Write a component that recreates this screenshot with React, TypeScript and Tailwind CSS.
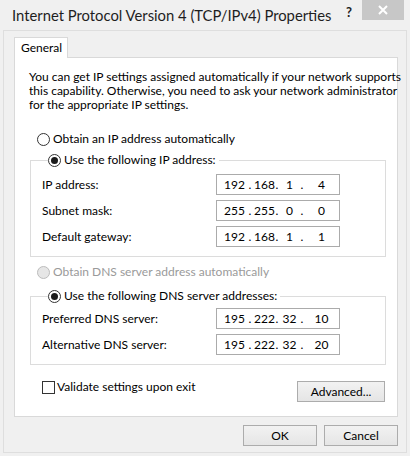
import React from "react";

const SEG_W = ["w-[23px]", "w-[19px]", "w-[17px]", "w-[31px]"];

function Radio({ checked, disabled, label }: { checked?: boolean; disabled?: boolean; label: string }) {
  return (
    <span className="flex items-center h-[16px] gap-[3px]">
      <span
        className={
          disabled
            ? "w-[13px] h-[13px] rounded-full border border-[#bcbcbc] bg-[#e6e6e6] shrink-0"
            : "w-[13px] h-[13px] rounded-full border border-[#333] bg-white flex items-center justify-center shrink-0"
        }
      >
        {checked && <span className="w-[7px] h-[7px] rounded-full bg-[#1b1b1b]" />}
      </span>
      <span className={disabled ? "text-[#9a9a9a]" : "text-black"}>{label}</span>
    </span>
  );
}

function IpBox({ parts }: { parts: string[] }) {
  return (
    <div className="h-[21px] w-[124px] border border-[#ababab] bg-white flex items-center pl-[6px]">
      {parts.map((p, i) => (
        <React.Fragment key={i}>
          {i > 0 && <span className="w-[8px] text-center">.</span>}
          <span className={SEG_W[i] + " text-center"}>{p}</span>
        </React.Fragment>
      ))}
    </div>
  );
}

function Row({ label, parts }: { label: string; parts: string[] }) {
  return (
    <div className="flex items-center">
      <span className="w-[174px]">{label}</span>
      <IpBox parts={parts} />
    </div>
  );
}

function Button({ children, className }: { children: React.ReactNode; className: string }) {
  return (
    <button
      className={
        "h-[21px] border border-[#acacac] bg-gradient-to-b from-[#f2f2f2] to-[#e5e5e5] text-black flex items-center justify-center " +
        className
      }
    >
      {children}
    </button>
  );
}

export default function App() {
  return (
    <div className="w-[410px] h-[456px] bg-[#f0f0f0] text-[12px] leading-[14px] text-black [font-family:Lato,sans-serif] flex flex-col">
      {/* title bar */}
      <div className="h-[30px] flex shrink-0">
        <span className="pl-[12px] pt-[6px] text-[14.8px] leading-[18px] text-[#1e1e1e]">
          Internet Protocol Version 4 (TCP/IPv4) Properties
        </span>
        <span className="ml-auto mt-[5px] mr-[10px] text-[13px] font-bold leading-[14px] text-[#222]">?</span>
        <div className="w-[42px] h-[20px] bg-[#c7c7c7] mr-[6px] flex items-center justify-center">
          <svg width="10" height="10" viewBox="0 0 10 10">
            <path d="M1 1 L9 9 M9 1 L1 9" stroke="white" strokeWidth="2" />
          </svg>
        </div>
      </div>

      {/* client area */}
      <div className="mx-[3px] mb-[3px] flex-1 border border-[#dedede] pl-[10px] pr-[8px] pt-[6px] flex flex-col">
        <div className="flex">
          <div className="relative z-10 -mb-px h-[21px] w-[54px] border border-b-0 border-[#d9d9d9] bg-white pl-[6px] pt-[3px]">
            General
          </div>
        </div>

        <div className="w-[384px] h-[360px] border border-[#d9d9d9] bg-white pl-[14px] pr-[11px] pt-[12px] flex flex-col">
          <p className="whitespace-nowrap">
            You can get IP settings assigned automatically if your network supports
            <br />
            this capability. Otherwise, you need to ask your network administrator
            <br />
            for the appropriate IP settings.
          </p>

          <div className="mt-[19px] pl-[8px]">
            <Radio label="Obtain an IP address automatically" />
          </div>

          <fieldset className="mt-[5px] ml-px border border-[#dcdcdc] pl-[11px] pt-[6px] pb-[9px] flex flex-col gap-[5px]">
            <legend className="ml-[6px] pr-[3px]">
              <Radio checked label="Use the following IP address:" />
            </legend>
            <Row label="IP address:" parts={["192", "168", "1", "4"]} />
            <Row label="Subnet mask:" parts={["255", "255", "0", "0"]} />
            <Row label="Default gateway:" parts={["192", "168", "1", "1"]} />
          </fieldset>

          <div className="mt-[7px] pl-[8px]">
            <Radio disabled label="Obtain DNS server address automatically" />
          </div>

          <fieldset className="mt-[8px] ml-px border border-[#dcdcdc] pl-[11px] pt-[4px] pb-[9px] flex flex-col gap-[5px]">
            <legend className="ml-[6px] pr-[3px]">
              <Radio checked label="Use the following DNS server addresses:" />
            </legend>
            <Row label="Preferred DNS server:" parts={["195", "222", "32", "10"]} />
            <Row label="Alternative DNS server:" parts={["195", "222", "32", "20"]} />
          </fieldset>

          <div className="mt-[15px] flex items-start pl-[13px] pr-px">
            <span className="flex items-center gap-[2px]">
              <span className="w-[13px] h-[13px] border border-[#333] bg-white" />
              <span>Validate settings upon exit</span>
            </span>
            <Button className="ml-auto mt-px w-[88px]">Advanced...</Button>
          </div>
        </div>

        <div className="mt-[8px] flex justify-end gap-[7px]">
          <Button className="w-[74px]">OK</Button>
          <Button className="w-[74px]">Cancel</Button>
        </div>
      </div>
    </div>
  );
}
